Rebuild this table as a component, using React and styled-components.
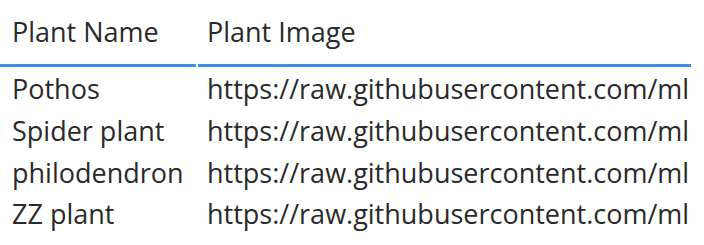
import React from "react";
import styled, { createGlobalStyle } from "styled-components";

const GlobalStyle = createGlobalStyle`
  html, body {
    margin: 0;
    padding: 0;
    background: #ffffff;
  }
  body {
    font-family: "Open Sans", "Noto Sans", sans-serif;
    color: #2a2a2a;
  }
`;

const Table = styled.table`
  border-collapse: separate;
  border-spacing: 2px 0;
  margin-left: -2px;
  font-size: 27px;
`;

const HeadCell = styled.th`
  text-align: left;
  font-weight: 400;
  padding: 12.5px 2px 13.5px ${(props) => props.$indent}px;
  line-height: 38px;
  border-bottom: 3px solid #3b8ee6;
  width: ${(props) => props.$width}px;
  white-space: nowrap;
`;

const Cell = styled.td`
  padding: 3px 2px 0 ${(props) => props.$indent}px;
  line-height: 38.8px;
  white-space: nowrap;
`;

const plants = [
  { name: "Pothos", image: "https://raw.githubusercontent.com/ml" },
  { name: "Spider plant", image: "https://raw.githubusercontent.com/ml" },
  { name: "philodendron", image: "https://raw.githubusercontent.com/ml" },
  { name: "ZZ plant", image: "https://raw.githubusercontent.com/ml" },
];

function App() {
  return (
    <>
      <GlobalStyle />
      <Table>
        <thead>
          <tr>
            <HeadCell $indent={12} $width={182}>
              Plant Name
            </HeadCell>
            <HeadCell $indent={9} $width={482}>
              Plant Image
            </HeadCell>
          </tr>
        </thead>
        <tbody>
          {plants.map((p) => (
            <tr key={p.name}>
              <Cell $indent={12}>{p.name}</Cell>
              <Cell $indent={9}>{p.image}</Cell>
            </tr>
          ))}
        </tbody>
      </Table>
    </>
  );
}

export default App;
